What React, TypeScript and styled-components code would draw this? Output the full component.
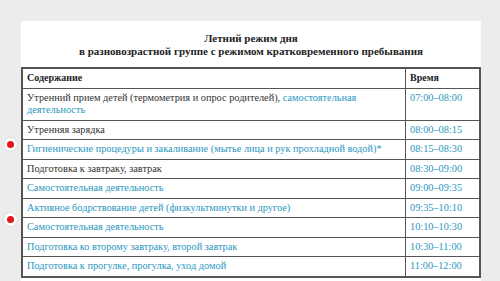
import React from "react"
import styled, { createGlobalStyle } from "styled-components"

const serif = `"Liberation Serif", "Times New Roman", serif`

const Global = createGlobalStyle`
  html, body {
    margin: 0;
    padding: 0;
    background: #ececec;
    font-family: ${serif};
  }
`

const Page = styled.div`
  position: relative;
  width: 500px;
  height: 281px;
  overflow: hidden;
  padding: 21px 19px 0 21px;
  box-sizing: border-box;
`

const Panel = styled.div`
  background: #fff;
  height: 100%;
`

const Title = styled.div`
  font-family: ${serif};
  font-weight: bold;
  font-size: 11px;
  line-height: 13px;
  color: #222;
  text-align: center;
  padding: 11px 0 9px;
`

const Table = styled.table`
  width: 100%;
  border-collapse: collapse;
  border: 2px solid #555;
  font-family: ${serif};
  font-size: 10.3px;
  line-height: 12.5px;
  color: #333;
`

const Cell = styled.td<{ $time?: boolean; $link?: boolean }>`
  border: 1px solid #555;
  padding: 3px 4px;
  vertical-align: top;
  text-align: left;
  font-family: ${serif};
  font-size: 10.3px;
  color: ${(p) => (p.$link || p.$time ? "#2b97c0" : "#333")};
  ${(p) => p.$time && `width: 65px;`}
`

const Head = styled.th`
  border: 1px solid #555;
  padding: 3px 4px;
  text-align: left;
  font-family: ${serif};
  font-size: 10px;
  font-weight: bold;
  color: #222;
`

const Link = styled.span`
  color: #2b97c0;
`

const Marker = styled.div<{ $top: number }>`
  position: absolute;
  left: 4px;
  top: ${(p) => p.$top}px;
  width: 13px;
  height: 13px;
  border-radius: 50%;
  background: #fff;
  box-shadow: 0 0 2px rgba(0, 0, 0, 0.15);
  display: flex;
  align-items: center;
  justify-content: center;

  &::after {
    content: "";
    width: 7px;
    height: 7px;
    border-radius: 50%;
    background: #e8141a;
  }
`

const rows: { text: React.ReactNode; time: string; link?: boolean }[] = [
  {
    text: (
      <>
        Утренний прием детей (термометрия и опрос родителей),{" "}
        <Link>самостоятельная деятельность</Link>
      </>
    ),
    time: "07:00–08:00",
  },
  { text: "Утренняя зарядка", time: "08:00–08:15" },
  {
    text: "Гигиенические процедуры и закаливание (мытье лица и рук прохладной водой)*",
    time: "08:15–08:30",
    link: true,
  },
  { text: "Подготовка к завтраку, завтрак", time: "08:30–09:00" },
  { text: "Самостоятельная деятельность", time: "09:00–09:35", link: true },
  {
    text: "Активное бодрствование детей (физкультминутки и другое)",
    time: "09:35–10:10",
    link: true,
  },
  { text: "Самостоятельная деятельность", time: "10:10–10:30", link: true },
  { text: "Подготовка ко второму завтраку, второй завтрак", time: "10:30–11:00", link: true },
  { text: "Подготовка к прогулке, прогулка, уход домой", time: "11:00–12:00", link: true },
]

export default function App() {
  return (
    <>
      <Global />
      <Page>
        <Panel>
          <Title>
            Летний режим дня
            <br />в разновозрастной группе с режимом кратковременного пребывания
          </Title>
          <Table>
            <tbody>
              <tr>
                <Head>Содержание</Head>
                <Head>Время</Head>
              </tr>
              {rows.map((r) => (
                <tr key={r.time}>
                  <Cell $link={r.link}>{r.text}</Cell>
                  <Cell $time>{r.time}</Cell>
                </tr>
              ))}
            </tbody>
          </Table>
        </Panel>
        <Marker $top={138} />
        <Marker $top={213} />
      </Page>
    </>
  )
}
